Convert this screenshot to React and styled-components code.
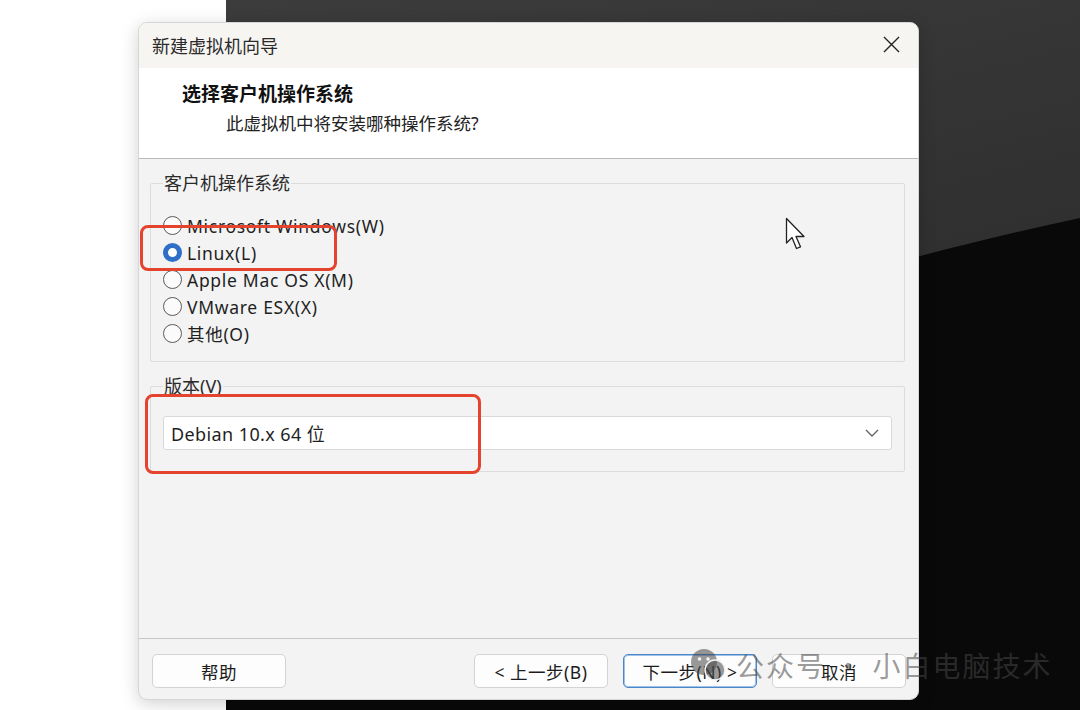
import React from "react";
import styled, { createGlobalStyle } from "styled-components";

const GlobalStyle = createGlobalStyle`
  html, body {
    margin: 0;
    padding: 0;
    background: #ffffff;
  }
  * {
    box-sizing: border-box;
  }
`;

const FONT = `"Noto Sans", "Noto Sans CJK SC", sans-serif`;

const options = [
  { label: "Microsoft Windows(W)", checked: false },
  { label: "Linux(L)", checked: true },
  { label: "Apple Mac OS X(M)", checked: false },
  { label: "VMware ESX(X)", checked: false },
  { label: "其他(O)", checked: false },
];

const App = () => {
  return (
    <Stage>
      <GlobalStyle />
      <LightSide />
      <DarkSide>
        <Wallpaper viewBox="0 0 854 710" preserveAspectRatio="none">
          <defs>
            <linearGradient id="wall" x1="0" y1="0" x2="0.3" y2="1">
              <stop offset="0" stopColor="#3c3c3c" />
              <stop offset="1" stopColor="#262626" />
            </linearGradient>
          </defs>
          <rect width="854" height="710" fill="url(#wall)" />
          <path d="M0 480 C 300 370, 600 272, 854 218 L 854 710 L 0 710 Z" fill="#090909" />
        </Wallpaper>
      </DarkSide>

      <Window>
        <TitleBar>
          <span>新建虚拟机向导</span>
          <CloseButton aria-label="close">
            <svg width="17" height="17" viewBox="0 0 17 17">
              <path d="M1 1 L16 16 M16 1 L1 16" stroke="#222" strokeWidth="1.4" />
            </svg>
          </CloseButton>
        </TitleBar>

        <Header>
          <HeaderTitle>选择客户机操作系统</HeaderTitle>
          <HeaderSub>此虚拟机中将安装哪种操作系统?</HeaderSub>
        </Header>

        <Body>
          <Group $padTop={17} $padBottom={14}>
            <Legend>客户机操作系统</Legend>
            {options.map((o) => (
              <RadioRow key={o.label}>
                <Radio $checked={o.checked} />
                <span>{o.label}</span>
              </RadioRow>
            ))}
          </Group>

          <Group $padTop={18} $padBottom={21}>
            <Legend>版本(V)</Legend>
            <Select>
              <span>Debian 10.x 64 位</span>
              <svg width="14" height="8" viewBox="0 0 14 8">
                <path d="M1 1 L7 7 L13 1" fill="none" stroke="#666" strokeWidth="1.4" />
              </svg>
            </Select>
          </Group>
        </Body>

        <Footer>
          <Button>帮助</Button>
          <ButtonGroup>
            <Button>&lt; 上一步(B)</Button>
            <Button $primary>下一步(N) &gt;</Button>
            <Button>取消</Button>
          </ButtonGroup>
        </Footer>
      </Window>

      <Highlight $x={140} $y={225} $w={197} $h={46} />
      <Highlight $x={145} $y={394} $w={336} $h={80} />

      <Cursor width="22" height="34" viewBox="0 0 22 34">
        <path
          d="M1.5 1.5 L1.5 26 L7 20.5 L11.5 31.5 L15.5 29.8 L11 19.5 L19 19.5 Z"
          fill="#fff"
          stroke="#222"
          strokeWidth="1.3"
          strokeLinejoin="round"
        />
      </Cursor>

      <Watermark>
        <svg width="36" height="34" viewBox="0 0 36 34">
          <circle cx="14" cy="14" r="13" fill="currentColor" />
          <circle cx="25" cy="22" r="10" fill="currentColor" stroke="#f3f3f3" strokeWidth="1.5" />
          <circle cx="9.5" cy="11" r="1.8" fill="#f3f3f3" />
          <circle cx="18" cy="11" r="1.8" fill="#f3f3f3" />
        </svg>
        <span>公众号 · 小白电脑技术</span>
      </Watermark>
    </Stage>
  );
};

const Stage = styled.div`
  position: relative;
  width: 1080px;
  height: 710px;
  display: flex;
  overflow: hidden;
  font-family: ${FONT};
`;

const LightSide = styled.div`
  width: 226px;
  background: #ffffff;
`;

const DarkSide = styled.div`
  flex: 1;
  background: #2e2e2e;
  display: flex;
`;

const Wallpaper = styled.svg`
  width: 100%;
  height: 100%;
  display: block;
`;

const Window = styled.div`
  position: absolute;
  left: 138px;
  top: 22px;
  width: 781px;
  height: 678px;
  display: flex;
  flex-direction: column;
  background: #f3f3f3;
  border: 1px solid #d6d6d6;
  border-radius: 9px;
  overflow: hidden;
  box-shadow: 0 4px 18px rgba(0, 0, 0, 0.18);
  color: #1b1b1b;
`;

const TitleBar = styled.div`
  height: 45px;
  display: flex;
  align-items: center;
  justify-content: space-between;
  padding: 0 12px 2px 13px;
  background: #f7f5f2;
  font-size: 18px;
  color: #2a2a2a;
`;

const CloseButton = styled.div`
  width: 30px;
  height: 30px;
  display: flex;
  align-items: center;
  justify-content: center;
`;

const Header = styled.div`
  height: 91px;
  background: #ffffff;
  border-bottom: 1px solid #b9b9b9;
  padding: 12px 0 0 43px;
  display: flex;
  flex-direction: column;
`;

const HeaderTitle = styled.div`
  font-size: 19px;
  font-weight: 700;
  line-height: 28px;
  color: #111;
`;

const HeaderSub = styled.div`
  font-size: 17.5px;
  line-height: 30px;
  padding-left: 44px;
  color: #222;
`;

const Body = styled.div`
  flex: 1;
  padding: 12px 13px 0 11px;
  display: flex;
  flex-direction: column;
  gap: 12px;
`;

const Group = styled.fieldset`
  margin: 0;
  border: 1px solid #dcdcdc;
  border-radius: 2px;
  padding: ${(p) => p.$padTop}px 12px ${(p) => p.$padBottom}px 12px;
  min-width: 0;
`;

const Legend = styled.legend`
  padding: 0 1px;
  font-size: 18px;
  line-height: 24px;
  color: #2a2a2a;
`;

const RadioRow = styled.div`
  height: 27px;
  display: flex;
  align-items: center;
  gap: 5px;
  font-size: 17.5px;
  letter-spacing: 0.7px;
  color: #1f1f1f;
`;

const Radio = styled.span`
  width: 19px;
  height: 19px;
  border-radius: 50%;
  flex-shrink: 0;
  background: ${(p) => (p.$checked ? "#ffffff" : "#fbfbfb")};
  border: ${(p) => (p.$checked ? "5.5px solid #2f6fc7" : "1.4px solid #5a5a5a")};
`;

const Select = styled.div`
  height: 34px;
  background: #ffffff;
  border: 1px solid #d9d9d9;
  border-radius: 3px;
  display: flex;
  align-items: center;
  justify-content: space-between;
  padding: 0 12px 0 7px;
  font-size: 18px;
  letter-spacing: 0.4px;
  color: #1f1f1f;
`;

const Footer = styled.div`
  border-top: 1px solid #c6c6c6;
  padding: 15px 12px 11px 13px;
  display: flex;
  justify-content: space-between;
`;

const ButtonGroup = styled.div`
  display: flex;
  gap: 15px;
`;

const Button = styled.div`
  width: 134px;
  height: 34px;
  display: flex;
  align-items: center;
  justify-content: center;
  background: #fdfdfd;
  border: 1px solid ${(p) => (p.$primary ? "#4a86c8" : "#d3d3d3")};
  box-shadow: ${(p) => (p.$primary ? "inset 0 0 0 1px #9fc2e8" : "none")};
  border-radius: 5px;
  font-size: 17.5px;
  letter-spacing: 0.5px;
  color: #1c1c1c;
`;

const Highlight = styled.div`
  position: absolute;
  left: ${(p) => p.$x}px;
  top: ${(p) => p.$y}px;
  width: ${(p) => p.$w}px;
  height: ${(p) => p.$h}px;
  border: 3px solid #e4442e;
  border-radius: 8px;
  pointer-events: none;
`;

const Cursor = styled.svg`
  position: absolute;
  left: 785px;
  top: 217px;
`;

const Watermark = styled.div`
  position: absolute;
  left: 690px;
  top: 645px;
  display: flex;
  align-items: center;
  gap: 10px;
  color: rgba(70, 70, 70, 0.55);
  font-family: "Noto Sans CJK SC", sans-serif;
  font-size: 28px;
  letter-spacing: 2px;
  white-space: pre;
  pointer-events: none;
`;

export default App;
